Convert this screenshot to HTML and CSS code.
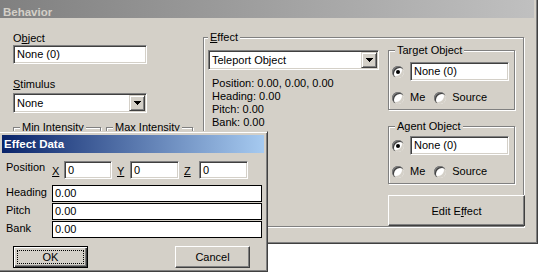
FILE: index.html
```html
<!DOCTYPE html>
<html lang="en">
<head>
    <meta charset="UTF-8">
    <title>Behavior</title>
    <link rel="stylesheet" href="styles.css">
</head>
<body>
    <!-- Ventana principal -->
    <div class="window behavior">
        <div class="caption inactive">Behavior</div>
        <div class="client">
            <div class="left-col">
                <div class="label">O<u>b</u>ject</div>
                <div class="edit object-edit">None (0)</div>
                <div class="label stim-label"><u>S</u>timulus</div>
                <div class="combo stim-combo">
                    <span class="combo-text">None</span>
                    <span class="drop"><svg width="7" height="4"><path d="M0 0h7v1H0zM1 1h5v1H1zM2 2h3v1H2zM3 3h1v1H3z"/></svg></span>
                </div>
                <div class="intensity">
                    <div class="group min-group"><span class="legend">Min Intensity</span></div>
                    <div class="group max-group"><span class="legend">Max Intensity</span></div>
                </div>
            </div>

            <div class="group effect-group">
                <span class="legend effect-legend"><u>E</u>ffect</span>
                <div class="effect-left">
                    <div class="combo effect-combo">
                        <span class="combo-text">Teleport Object</span>
                        <span class="drop"><svg width="7" height="4"><path d="M0 0h7v1H0zM1 1h5v1H1zM2 2h3v1H2zM3 3h1v1H3z"/></svg></span>
                    </div>
                    <div class="info">
                        Position: 0.00, 0.00, 0.00<br>
                        Heading: 0.00<br>
                        Pitch: 0.00<br>
                        Bank: 0.00
                    </div>
                </div>
                <div class="effect-right">
                    <div class="group obj-group">
                        <span class="legend">Target Object</span>
                        <div class="row">
                            <span class="radio checked"></span>
                            <div class="edit obj-edit">None (0)</div>
                        </div>
                        <div class="row row2">
                            <span class="radio"></span><span class="opt">Me</span>
                            <span class="radio source"></span><span class="opt">Source</span>
                        </div>
                    </div>
                    <div class="group obj-group agent-group">
                        <span class="legend">Agent Object</span>
                        <div class="row">
                            <span class="radio checked"></span>
                            <div class="edit obj-edit">None (0)</div>
                        </div>
                        <div class="row row2">
                            <span class="radio"></span><span class="opt">Me</span>
                            <span class="radio source"></span><span class="opt">Source</span>
                        </div>
                    </div>
                    <button class="btn edit-effect">Edit E<u>f</u>fect</button>
                </div>
            </div>
        </div>
    </div>

    <!-- Ventana de datos del efecto -->
    <div class="window effect-data">
        <div class="caption active">Effect Data</div>
        <div class="client">
            <div class="pos-row">
                <span class="pos-label">Position</span>
                <span class="axis axis-x"><u>X</u></span>
                <div class="edit xyz-edit x-edit">0</div>
                <span class="axis axis-y"><u>Y</u></span>
                <div class="edit xyz-edit">0</div>
                <span class="axis axis-z"><u>Z</u></span>
                <div class="edit xyz-edit">0</div>
            </div>
            <div class="field-row first">
                <span class="field-label">Heading</span>
                <div class="field-edit">0.00</div>
            </div>
            <div class="field-row">
                <span class="field-label">Pitch</span>
                <div class="field-edit">0.00</div>
            </div>
            <div class="field-row">
                <span class="field-label">Bank</span>
                <div class="field-edit">0.00</div>
            </div>
            <div class="btn-row">
                <button class="btn default ok">OK</button>
                <button class="btn cancel">Cancel</button>
            </div>
        </div>
    </div>
</body>
</html>
```

FILE: styles.css
```css
* {
    box-sizing: border-box;
}

body {
    margin: 0;
    width: 538px;
    height: 272px;
    overflow: hidden;
    position: relative;
    background: #fff;
    font-family: "Liberation Sans", Arial, sans-serif;
    font-size: 11px;
    color: #000;
}

u {
    text-decoration: underline;
    text-underline-offset: 1px;
}

/* Ventanas clasicas */
.window {
    position: absolute;
    display: flex;
    flex-direction: column;
    background: #d4d0c8;
    border: 1px solid;
    border-color: #d4d0c8 #404040 #404040 #d4d0c8;
    box-shadow: inset 1px 1px #fff, inset -1px -1px #808080;
    padding: 3px;
}

.behavior {
    left: -4px;
    top: -4px;
    width: 542px;
    height: 248px;
}

.effect-data {
    left: -2px;
    top: 131px;
    width: 270px;
    height: 141px;
}

.caption {
    flex: none;
    height: 18px;
    line-height: 18px;
    padding-left: 2px;
    font-size: 11.5px;
    font-weight: bold;
    overflow: hidden;
    white-space: nowrap;
}

.caption.inactive {
    background: linear-gradient(to right, #808080, #c0c0c0);
    color: #d4d0c8;
    padding: 3px 0 0 3px;
}

.caption.active {
    background: linear-gradient(to right, #0a246a, #a6caf0);
    color: #fff;
}

.label {
    line-height: 13px;
}

/* Controles */
.edit {
    background: #fff;
    border: 1px solid;
    border-color: #808080 #fff #fff #808080;
    box-shadow: inset 1px 1px #404040, inset -1px -1px #d4d0c8;
    padding-left: 3px;
    white-space: nowrap;
    overflow: hidden;
}

.combo {
    display: flex;
    height: 20px;
    padding: 1px;
    background: #fff;
    border: 1px solid;
    border-color: #808080 #fff #fff #808080;
    box-shadow: inset 1px 1px #404040, inset -1px -1px #d4d0c8;
}

.combo-text {
    flex: 1;
    padding: 1px 0 0 2px;
    line-height: 15px;
    white-space: nowrap;
}

.drop {
    width: 16px;
    height: 16px;
    display: flex;
    align-items: center;
    justify-content: center;
    background: #d4d0c8;
    border: 1px solid;
    border-color: #d4d0c8 #404040 #404040 #d4d0c8;
    box-shadow: inset 1px 1px #fff, inset -1px -1px #808080;
}

.drop svg {
    display: block;
    margin-top: -1px;
}

.group {
    position: relative;
    border: 1px solid #808080;
    box-shadow: inset 1px 1px #fff, 1px 1px #fff;
}

.legend {
    position: absolute;
    top: -7px;
    left: 6px;
    padding: 0 2px;
    line-height: 13px;
    background: #d4d0c8;
    white-space: nowrap;
}

.radio {
    position: relative;
    flex: none;
    width: 12px;
    height: 12px;
    border-radius: 50%;
    background: #fff;
    box-shadow: inset 1px 1px #808080, inset 2px 2px #404040, inset -2px -2px #d4d0c8;
}

.radio.checked::after {
    content: "";
    position: absolute;
    left: 4px;
    top: 4px;
    width: 4px;
    height: 4px;
    border-radius: 50%;
    background: #000;
}

.btn {
    position: relative;
    padding: 0;
    margin: 0;
    font: inherit;
    color: #000;
    background: #d4d0c8;
    border: 1px solid;
    border-color: #fff #404040 #404040 #fff;
    box-shadow: inset -1px -1px #808080;
}

.btn.default {
    border: 1px solid #000;
    box-shadow: inset 1px 1px #fff, inset -1px -1px #404040, inset -2px -2px #808080;
}

.btn.default::after {
    content: "";
    position: absolute;
    inset: 3px;
    border: 1px dotted #000;
}

/* Behavior */
.behavior .client {
    flex: 1;
    display: flex;
}

.left-col {
    width: 180px;
    margin: 14px 0 0 13px;
    display: flex;
    flex-direction: column;
}

.object-edit {
    width: 134px;
    height: 19px;
    line-height: 17px;
}

.stim-label {
    margin-top: 14px;
}

.stim-combo {
    width: 134px;
    margin-top: 2px;
}

.intensity {
    display: flex;
    gap: 5px;
    margin-top: 14px;
}

.min-group {
    width: 88px;
    height: 60px;
}

.max-group {
    width: 87px;
    height: 60px;
}

.effect-group {
    width: 321px;
    height: 190px;
    margin: 19px 0 0 10px;
    display: flex;
}

.effect-legend {
    left: 4px;
}

.effect-left {
    width: 175px;
    padding: 12px 0 0 4px;
}

.effect-combo {
    width: 171px;
}

.info {
    margin-top: 7px;
    padding-left: 4px;
    line-height: 13px;
}

.effect-right {
    margin-left: 9px;
    padding-top: 12px;
    display: flex;
    flex-direction: column;
}

.obj-group {
    width: 127px;
    height: 61px;
    padding: 11px 0 0 3px;
}

.agent-group {
    height: 59px;
    margin-top: 16px;
    padding-top: 9px;
}

.row {
    display: flex;
    align-items: center;
}

.row2 {
    margin-top: 10px;
    line-height: 13px;
}

.obj-edit {
    width: 99px;
    height: 19px;
    line-height: 17px;
    margin-left: 6px;
}

.opt {
    margin-left: 6px;
}

.radio.source {
    margin-left: 9px;
}

.edit-effect {
    width: 137px;
    height: 31px;
    margin-top: 11px;
}

/* Effect Data */
.effect-data .client {
    flex: 1;
    display: flex;
    flex-direction: column;
    padding: 8px 0 0 4px;
}

.pos-row {
    display: flex;
    height: 18px;
}

.pos-label {
    width: 46px;
    line-height: 13px;
}

.axis {
    line-height: 13px;
    padding-top: 4px;
}

.axis-x {
    width: 12px;
}

.axis-y {
    width: 13px;
    margin-left: 5px;
}

.axis-z {
    width: 15px;
    margin-left: 5px;
}

.xyz-edit {
    width: 49px;
    height: 18px;
    line-height: 16px;
}

.x-edit {
    width: 48px;
}

.field-row {
    display: flex;
    height: 17px;
    margin-top: 1px;
}

.field-row.first {
    margin-top: 6px;
}

.field-label {
    width: 46px;
    line-height: 15px;
}

.field-edit {
    width: 210px;
    background: #fff;
    border: 1px solid #000;
    padding-left: 2px;
    line-height: 15px;
}

.btn-row {
    display: flex;
    margin-top: 8px;
}

.btn-row .btn {
    width: 75px;
    height: 22px;
}

.ok {
    margin-left: 7px;
}

.cancel {
    margin-left: 87px;
}
```
